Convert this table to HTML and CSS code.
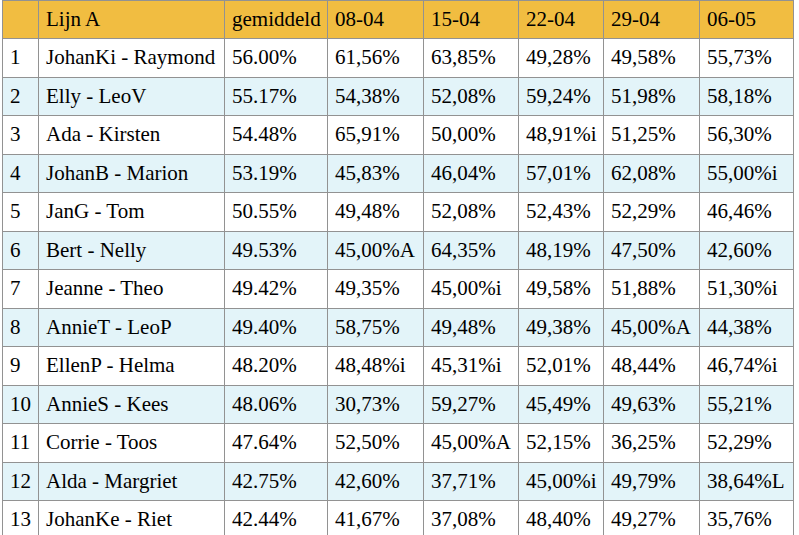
FILE: index.html
```html
<!DOCTYPE html>
<html>
<head>
<meta charset="utf-8">
<link rel="stylesheet" href="styles.css">
</head>
<body>
<table class="scores">
<colgroup>
<col class="c-nr"><col class="c-name"><col class="c-avg"><col class="c-d1"><col class="c-d2"><col class="c-d3"><col class="c-d4"><col class="c-d5">
</colgroup>
<thead>
<tr><th></th><th>Lijn A</th><th>gemiddeld</th><th>08-04</th><th>15-04</th><th>22-04</th><th>29-04</th><th>06-05</th></tr>
</thead>
<tbody>
<tr><td>1</td><td>JohanKi - Raymond</td><td>56.00%</td><td>61,56%</td><td>63,85%</td><td>49,28%</td><td>49,58%</td><td>55,73%</td></tr>
<tr><td>2</td><td>Elly - LeoV</td><td>55.17%</td><td>54,38%</td><td>52,08%</td><td>59,24%</td><td>51,98%</td><td>58,18%</td></tr>
<tr><td>3</td><td>Ada - Kirsten</td><td>54.48%</td><td>65,91%</td><td>50,00%</td><td>48,91%i</td><td>51,25%</td><td>56,30%</td></tr>
<tr><td>4</td><td>JohanB - Marion</td><td>53.19%</td><td>45,83%</td><td>46,04%</td><td>57,01%</td><td>62,08%</td><td>55,00%i</td></tr>
<tr><td>5</td><td>JanG - Tom</td><td>50.55%</td><td>49,48%</td><td>52,08%</td><td>52,43%</td><td>52,29%</td><td>46,46%</td></tr>
<tr><td>6</td><td>Bert - Nelly</td><td>49.53%</td><td>45,00%A</td><td>64,35%</td><td>48,19%</td><td>47,50%</td><td>42,60%</td></tr>
<tr><td>7</td><td>Jeanne - Theo</td><td>49.42%</td><td>49,35%</td><td>45,00%i</td><td>49,58%</td><td>51,88%</td><td>51,30%i</td></tr>
<tr><td>8</td><td>AnnieT - LeoP</td><td>49.40%</td><td>58,75%</td><td>49,48%</td><td>49,38%</td><td>45,00%A</td><td>44,38%</td></tr>
<tr><td>9</td><td>EllenP - Helma</td><td>48.20%</td><td>48,48%i</td><td>45,31%i</td><td>52,01%</td><td>48,44%</td><td>46,74%i</td></tr>
<tr><td>10</td><td>AnnieS - Kees</td><td>48.06%</td><td>30,73%</td><td>59,27%</td><td>45,49%</td><td>49,63%</td><td>55,21%</td></tr>
<tr><td>11</td><td>Corrie - Toos</td><td>47.64%</td><td>52,50%</td><td>45,00%A</td><td>52,15%</td><td>36,25%</td><td>52,29%</td></tr>
<tr><td>12</td><td>Alda - Margriet</td><td>42.75%</td><td>42,60%</td><td>37,71%</td><td>45,00%i</td><td>49,79%</td><td>38,64%L</td></tr>
<tr><td>13</td><td>JohanKe - Riet</td><td>42.44%</td><td>41,67%</td><td>37,08%</td><td>48,40%</td><td>49,27%</td><td>35,76%</td></tr>
</tbody>
</table>
</body>
</html>
```
FILE: styles.css
```css
html, body {
  margin: 0;
  padding: 0;
  background: #ffffff;
}
body {
  padding: 0 0 0 2px;
  font-family: "Liberation Serif", "Times New Roman", "DejaVu Serif", serif;
  font-size: 21px;
  color: #000000;
}
.scores {
  border-collapse: collapse;
  table-layout: fixed;
  width: 791px;
}
.c-nr { width: 36px; }
.c-name { width: 186px; }
.c-avg { width: 103px; }
.c-d1 { width: 96px; }
.c-d2 { width: 95px; }
.c-d3 { width: 85px; }
.c-d4 { width: 96px; }
.c-d5 { width: 94px; }
.scores th,
.scores td {
  border: 1px solid #929292;
  padding: 0 0 0 7px;
  height: 37.5px;
  text-align: left;
  font-weight: normal;
  white-space: nowrap;
  overflow: hidden;
}
.scores thead th {
  background: #f1bd41;
  height: 37px;
}
.scores tbody tr:nth-child(even) td {
  background: #e3f4f9;
}
```
